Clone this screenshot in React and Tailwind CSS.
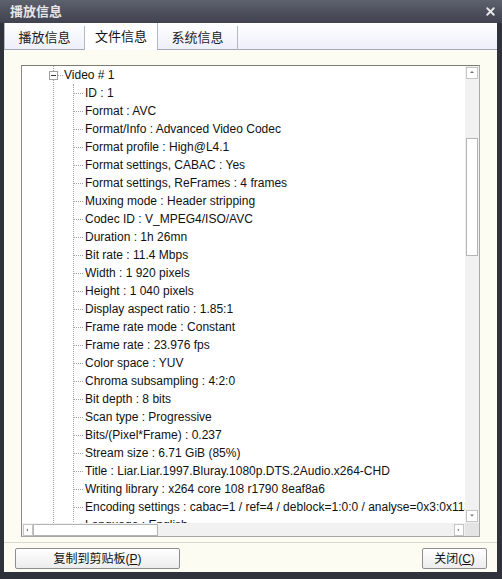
import { X } from 'lucide-react'

const cjk = { fontFamily: '"Liberation Sans", "Noto Sans CJK SC", sans-serif' }

const fields = [
  'ID : 1',
  'Format : AVC',
  'Format/Info : Advanced Video Codec',
  'Format profile : High@L4.1',
  'Format settings, CABAC : Yes',
  'Format settings, ReFrames : 4 frames',
  'Muxing mode : Header stripping',
  'Codec ID : V_MPEG4/ISO/AVC',
  'Duration : 1h 26mn',
  'Bit rate : 11.4 Mbps',
  'Width : 1 920 pixels',
  'Height : 1 040 pixels',
  'Display aspect ratio : 1.85:1',
  'Frame rate mode : Constant',
  'Frame rate : 23.976 fps',
  'Color space : YUV',
  'Chroma subsampling : 4:2:0',
  'Bit depth : 8 bits',
  'Scan type : Progressive',
  'Bits/(Pixel*Frame) : 0.237',
  'Stream size : 6.71 GiB (85%)',
  'Title : Liar.Liar.1997.Bluray.1080p.DTS.2Audio.x264-CHD',
  'Writing library : x264 core 108 r1790 8eaf8a6',
  'Encoding settings : cabac=1 / ref=4 / deblock=1:0:0 / analyse=0x3:0x113 / me=umh / subme=9',
  'Language : English',
]

function Arrow({ dir }) {
  const pts = {
    up: '2,6 6,2 10,6',
    down: '2,3 6,7 10,3',
    left: '6,2 2,6 6,10',
    right: '3,2 7,6 3,10',
  }[dir]
  return (
    <svg width="12" height="12" viewBox="0 0 12 12">
      <polygon points={pts} fill="#707070" transform="scale(0.6) translate(4,4)" />
    </svg>
  )
}

function Tab({ label, active }) {
  return (
    <div
      className={
        active
          ? 'w-[73px] h-[27px] -mb-px flex items-center justify-center bg-white border-r border-[#b4b8c4] text-[13px] text-[#111]'
          : 'w-[80px] h-[24px] mt-[3px] flex items-center justify-center border-r border-[#b4b8c4] text-[13px] text-[#222]'
      }
    >
      {label}
    </div>
  )
}

function Button({ children, className }) {
  return (
    <div
      className={`h-[21px] flex items-center justify-center border border-[#8c8e94] rounded-[2px] bg-gradient-to-b from-white to-[#ececec] text-[12px] text-[#111] ${className}`}
    >
      {children}
    </div>
  )
}

export default function App() {
  return (
    <div className="w-[502px] h-[579px] bg-[#30323b] flex flex-col overflow-hidden" style={cjk}>
      {/* title bar */}
      <div className="h-[23px] shrink-0 flex items-center justify-between pl-[10px] pr-[5px] bg-gradient-to-b from-[#5d606d] to-[#40434f]">
        <span className="text-[13px] font-bold text-[#e6e6e8]">播放信息</span>
        <X size={13} strokeWidth={3.5} className="text-[#e8e8ea]" />
      </div>

      <div className="flex-1 ml-[4px] mr-[5px] mb-[7px] bg-[#fcfcf3] flex flex-col">
        {/* tabs */}
        <div className="h-[27px] shrink-0 flex items-start bg-gradient-to-b from-white to-[#eef0fa] border-b border-[#a4a8b4] border-l border-l-[#b4b8c4]">
          <Tab label="播放信息" />
          <Tab label="文件信息" active />
          <Tab label="系统信息" />
        </div>

        {/* list box */}
        <div className="mt-[15px] mx-[17px] h-[472px] flex flex-col bg-white border border-[#a8a8a8] border-t-[#7c7c70] border-l-[#8a8a8a]">
          <div className="flex flex-1 min-h-0">
            <div className="flex-1 min-w-0 overflow-hidden pl-[31px] text-[12px] text-[#111]">
              <div className="border-l border-dotted border-[#a0a0a0] h-full">
                <div className="h-[18px] flex items-center">
                  <div className="-ml-[5px] w-[9px] h-[9px] border border-[#a0a0a0] bg-white flex items-center justify-center">
                    <div className="w-[5px] h-px bg-[#333]" />
                  </div>
                  <div className="w-[5px] border-t border-dotted border-[#a0a0a0]" />
                  <span className="ml-[1px] whitespace-nowrap">Video # 1</span>
                </div>
                <div className="ml-[19px] border-l border-dotted border-[#a0a0a0]">
                  {fields.map((f) => (
                    <div key={f} className="h-[18px] flex items-center">
                      <div className="w-[9px] shrink-0 border-t border-dotted border-[#a0a0a0]" />
                      <span className="ml-[2px] whitespace-nowrap">{f}</span>
                    </div>
                  ))}
                </div>
              </div>
            </div>
            {/* vertical scrollbar */}
            <div className="w-[14px] shrink-0 bg-[#f1f1f1] flex flex-col items-center py-px">
              <div className="w-[12px] h-[12px] border border-[#c4c4c4] bg-white flex items-center justify-center">
                <Arrow dir="up" />
              </div>
              <div className="h-[59px]" />
              <div className="w-[12px] h-[118px] border border-[#b4b4b4] bg-white" />
              <div className="flex-1" />
              <div className="w-[12px] h-[12px] border border-[#c4c4c4] bg-white flex items-center justify-center">
                <Arrow dir="down" />
              </div>
            </div>
          </div>
          {/* horizontal scrollbar */}
          <div className="h-[13px] shrink-0 flex">
            <div className="flex-1 bg-[#f1f1f1] flex items-center px-px">
              <div className="w-[10px] h-[12px] border border-[#c4c4c4] bg-white flex items-center justify-center">
                <Arrow dir="left" />
              </div>
              <div className="w-[125px] h-[12px] border border-[#b4b4b4] bg-white" />
              <div className="flex-1" />
              <div className="w-[10px] h-[12px] border border-[#c4c4c4] bg-white flex items-center justify-center">
                <Arrow dir="right" />
              </div>
            </div>
            <div className="w-[14px] bg-[#e4e4e4]" />
          </div>
        </div>

        <div className="mt-[5px] border-t border-[#d8d8d0]" />

        {/* buttons */}
        <div className="mt-[5px] flex justify-between pl-[11px] pr-[10px]">
          <Button className="w-[165px]">
            复制到剪贴板(<span className="underline">P</span>)
          </Button>
          <Button className="w-[65px]">
            关闭(<span className="underline">C</span>)
          </Button>
        </div>
      </div>
    </div>
  )
}
